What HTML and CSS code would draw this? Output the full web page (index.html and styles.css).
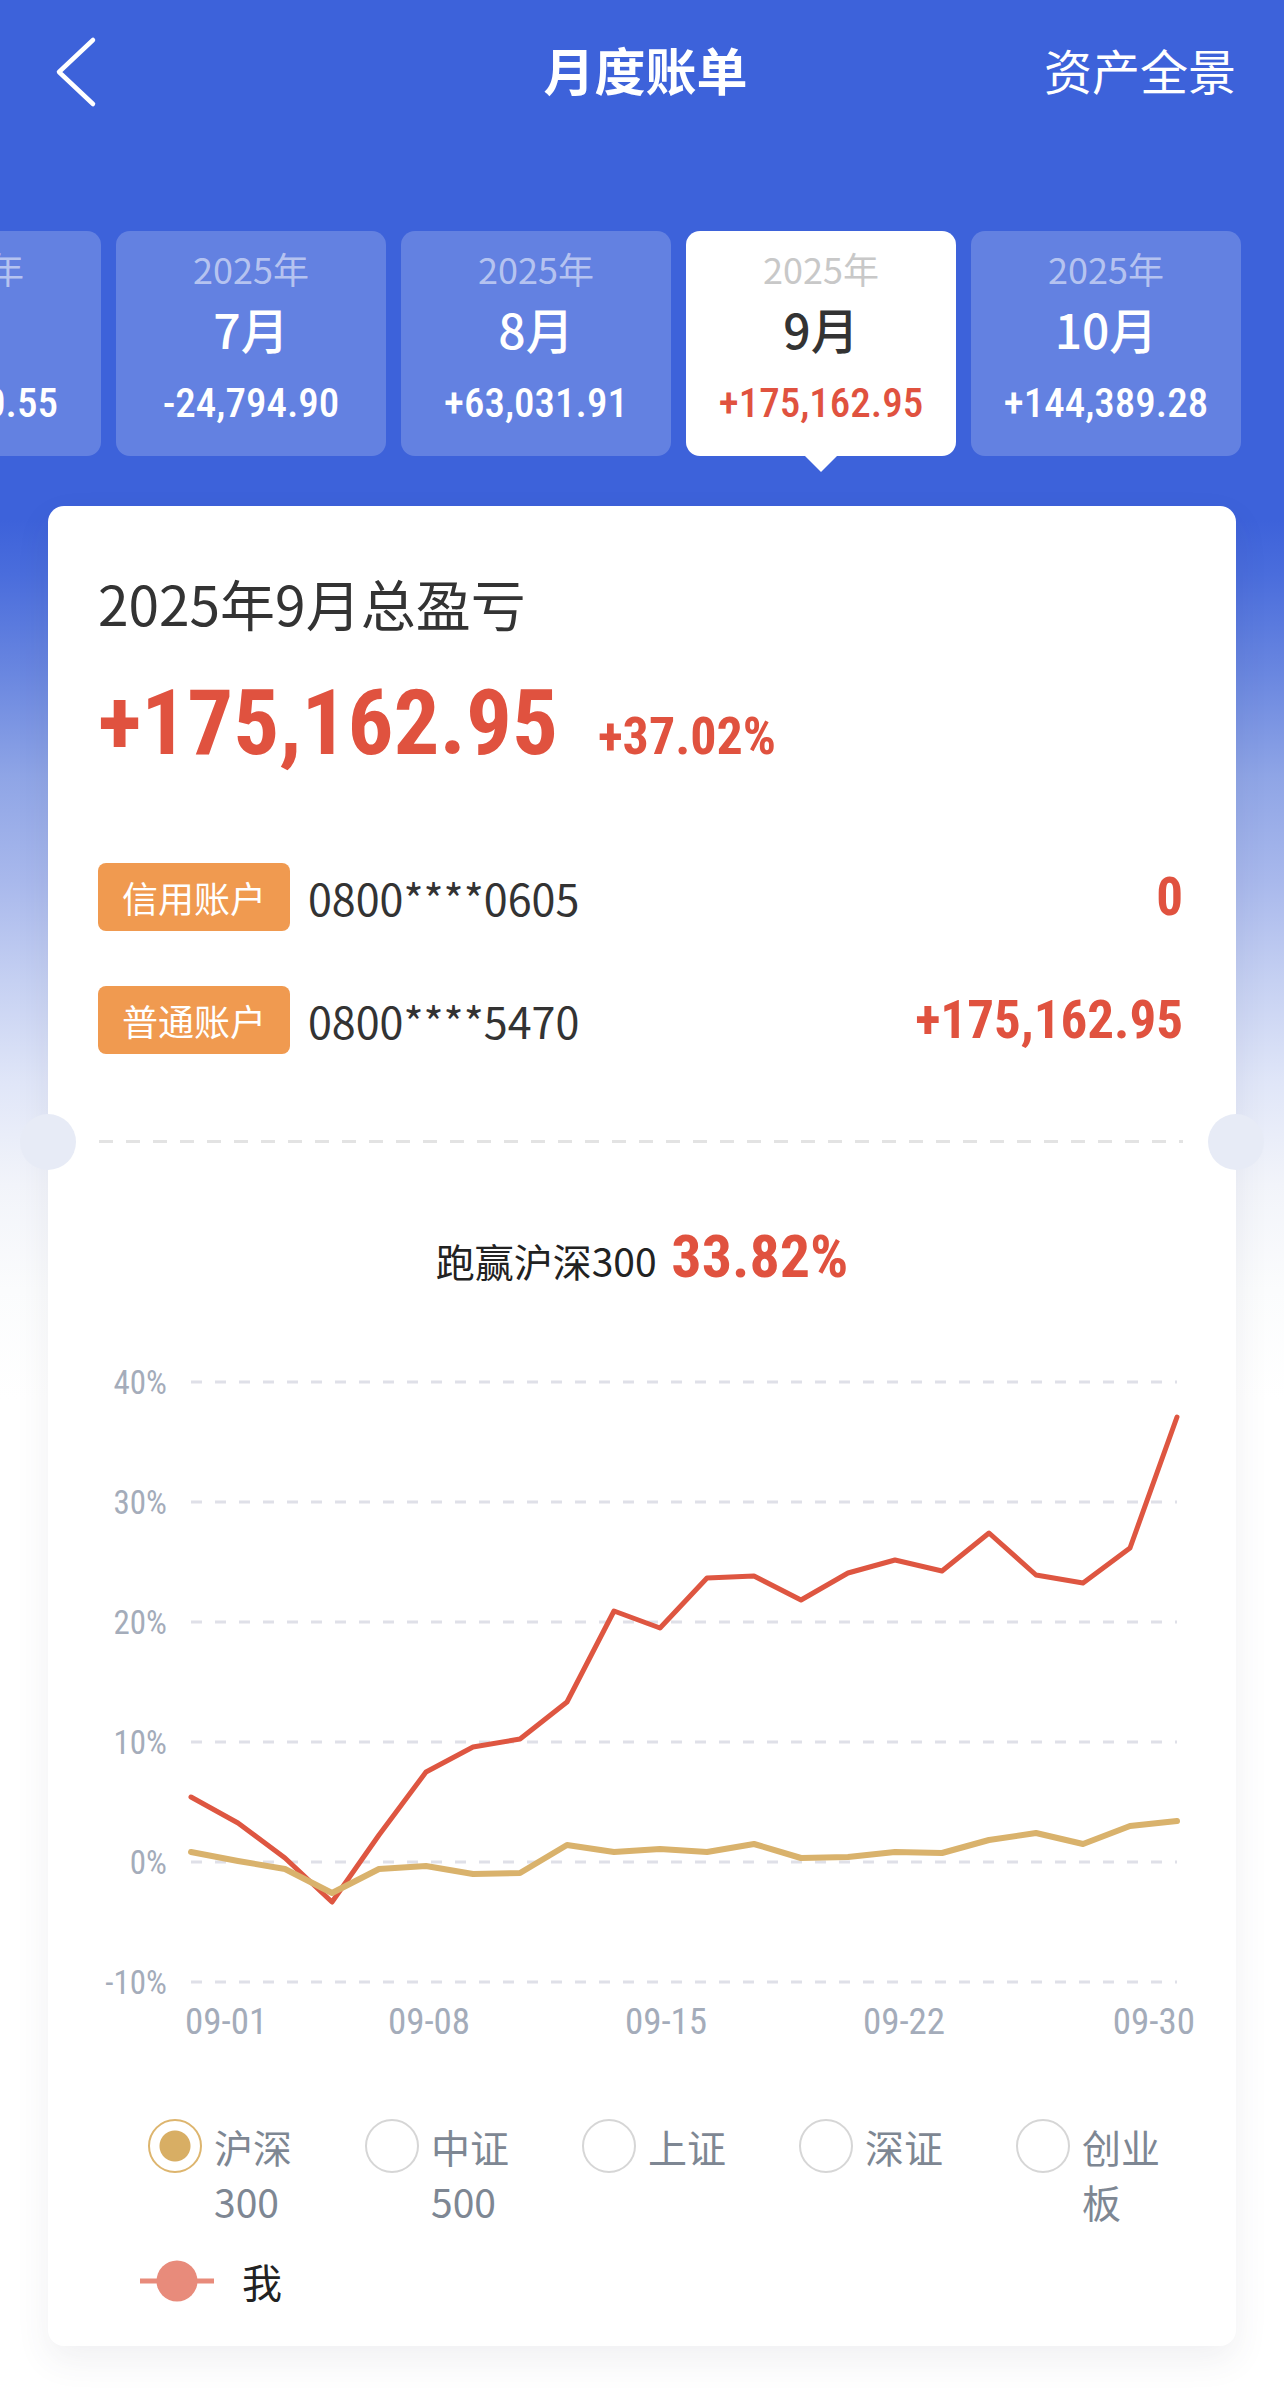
FILE: index.html
```html
<!DOCTYPE html>
<html lang="zh-CN">
  <head>
    <meta charset="utf-8">
    <title>月度账单</title>
    <link rel="stylesheet" href="styles.css">
  </head>
  <body>
    <header class="topbar">
      <a class="back" href="#">
        <svg width="44" height="72" viewBox="0 0 44 72">
          <path d="M38 4 L4 36 L38 68" fill="none" stroke="#fff" stroke-width="4.5" stroke-linecap="round" stroke-linejoin="round"/>
        </svg>
      </a>
      <h1 class="title">月度账单</h1>
      <a class="overview" href="#">资产全景</a>
    </header>

    <div class="months">
      <div class="month">
        <div class="month-year">2025年</div>
        <div class="month-name">6月</div>
        <div class="month-value num">+41,860.55</div>
      </div>
      <div class="month">
        <div class="month-year">2025年</div>
        <div class="month-name">7月</div>
        <div class="month-value num">-24,794.90</div>
      </div>
      <div class="month">
        <div class="month-year">2025年</div>
        <div class="month-name">8月</div>
        <div class="month-value num">+63,031.91</div>
      </div>
      <div class="month active">
        <div class="month-year">2025年</div>
        <div class="month-name">9月</div>
        <div class="month-value num">+175,162.95</div>
      </div>
      <div class="month">
        <div class="month-year">2025年</div>
        <div class="month-name">10月</div>
        <div class="month-value num">+144,389.28</div>
      </div>
    </div>

    <main class="bill">
      <section class="summary">
        <div class="summary-title">2025年9月总盈亏</div>
        <div class="summary-amount">
          <span class="summary-total num">+175,162.95</span>
          <span class="summary-rate num">+37.02%</span>
        </div>
        <ul class="accounts">
          <li class="account">
            <span class="account-tag">信用账户</span>
            <span class="account-no">0800****0605</span>
            <span class="account-pnl num">0</span>
          </li>
          <li class="account">
            <span class="account-tag">普通账户</span>
            <span class="account-no">0800****5470</span>
            <span class="account-pnl num">+175,162.95</span>
          </li>
        </ul>
      </section>

      <div class="divider"></div>

      <section class="compare">
        <div class="compare-title">跑赢沪深300 <span class="compare-rate num">33.82%</span></div>

        <!-- chart drawn in page coordinates -->
        <svg class="chart" width="1188" height="720" viewBox="49 1330 1188 720">
          <g class="grid">
            <line x1="192" y1="1382" x2="1178" y2="1382"/>
            <line x1="192" y1="1502" x2="1178" y2="1502"/>
            <line x1="192" y1="1622" x2="1178" y2="1622"/>
            <line x1="192" y1="1742" x2="1178" y2="1742"/>
            <line x1="192" y1="1862" x2="1178" y2="1862"/>
            <line x1="192" y1="1982" x2="1178" y2="1982"/>
          </g>
          <g class="axis-y">
            <text x="168" y="1394">40%</text>
            <text x="168" y="1514">30%</text>
            <text x="168" y="1634">20%</text>
            <text x="168" y="1754">10%</text>
            <text x="168" y="1874">0%</text>
            <text x="168" y="1994">-10%</text>
          </g>
          <g class="axis-x">
            <text x="186" y="2034">09-01</text>
            <text x="430" y="2034" text-anchor="middle">09-08</text>
            <text x="667" y="2034" text-anchor="middle">09-15</text>
            <text x="905" y="2034" text-anchor="middle">09-22</text>
            <text x="1196" y="2034" text-anchor="end">09-30</text>
          </g>
          <polyline class="line-me" points="192,1797 239,1823 286,1858 333,1902 380,1835 427,1772 474,1747 521,1739 568,1702 615,1611 661,1628 708,1578 755,1576 802,1600 849,1573 896,1560 943,1571 990,1533 1037,1575 1084,1583 1131,1548 1178,1417"/>
          <polyline class="line-index" points="192,1852 239,1861 286,1869 333,1893 380,1869 427,1866 474,1874 521,1873 568,1845 615,1852 661,1849 708,1852 755,1844 802,1858 849,1857 896,1852 943,1853 990,1840 1037,1833 1084,1844 1131,1826 1178,1821"/>
        </svg>

        <div class="legend">
          <div class="legend-item">
            <span class="radio on"></span>
            <span class="legend-label">沪深300</span>
          </div>
          <div class="legend-item">
            <span class="radio"></span>
            <span class="legend-label">中证500</span>
          </div>
          <div class="legend-item">
            <span class="radio"></span>
            <span class="legend-label">上证</span>
          </div>
          <div class="legend-item">
            <span class="radio"></span>
            <span class="legend-label">深证</span>
          </div>
          <div class="legend-item">
            <span class="radio"></span>
            <span class="legend-label">创业板</span>
          </div>
        </div>

        <div class="legend-me">
          <svg width="74" height="42" viewBox="0 0 74 42">
            <line x1="0" y1="21" x2="74" y2="21" stroke="#e88b7b" stroke-width="5"/>
            <circle cx="37" cy="21" r="20.5" fill="#e88b7b"/>
          </svg>
          <span class="legend-me-label">我</span>
        </div>
      </section>
    </main>
  </body>
</html>
```

FILE: styles.css
```css
* {
  box-sizing: border-box;
}

body {
  margin: 0;
  min-height: 2388px;
  overflow-x: hidden;
  font-family: "Noto Sans CJK SC", "Noto Sans", sans-serif;
  color: #333;
  background: linear-gradient(180deg,
    #3d62da 0,
    #3d62da 520px,
    #4a6ddc 575px,
    #6a87e0 675px,
    #8fa5e6 777px,
    #a8b8ec 880px,
    #c5d0f2 980px,
    #e0e6f8 1083px,
    #f2f4fa 1185px,
    #fbfcfd 1290px,
    #ffffff 1400px);
}

/* numbers use a narrow face */
.num {
  font-family: "Roboto Condensed", "DejaVu Sans Condensed", "Liberation Sans Narrow", "Roboto", sans-serif;
  font-stretch: condensed;
}

a {
  color: inherit;
  text-decoration: none;
}

/* top bar */
.topbar {
  height: 144px;
  display: grid;
  grid-template-columns: 1fr auto 1fr;
  align-items: center;
  padding: 0 48px 0 55px;
  color: #fff;
}

.back {
  display: flex;
}

.title {
  margin: 0 0 6px;
  font-size: 51px;
  font-weight: 700;
  line-height: 1;
}

.overview {
  justify-self: end;
  margin-bottom: 6px;
  font-size: 48px;
}

/* month tabs */
.months {
  display: flex;
  gap: 15px;
  margin: 87px 0 0 -169px;
}

.month {
  position: relative;
  flex: 0 0 270px;
  height: 225px;
  padding-top: 15px;
  border-radius: 14px;
  background: rgba(255, 255, 255, 0.2);
  color: #fff;
  text-align: center;
}

.month-year {
  font-size: 36px;
  line-height: 44px;
  color: rgba(255, 255, 255, 0.55);
}

.month-name {
  margin-top: 10px;
  font-size: 48px;
  line-height: 56px;
  font-weight: 500;
}

.month-value {
  margin-top: 23px;
  font-size: 41px;
  line-height: 48px;
  font-weight: 500;
}

.month.active {
  background: #fff;
}

.month.active .month-year {
  color: #c8c8c8;
}

.month.active .month-name {
  color: #333;
}

.month.active .month-value {
  color: #e0523f;
}

.month.active::after {
  content: "";
  position: absolute;
  left: 50%;
  bottom: -16px;
  margin-left: -16px;
  border: 16px solid transparent;
  border-top-color: #fff;
  border-bottom: 0;
}

/* bill card */
.bill {
  width: 1188px;
  margin: 50px auto 0;
  padding: 61px 50px 37px;
  background: #fff;
  border-radius: 16px;
  box-shadow: 0 14px 34px rgba(60, 70, 90, 0.08);
}

.summary-title {
  font-size: 55px;
  line-height: 70px;
  color: #333;
}

.summary-amount {
  display: flex;
  align-items: baseline;
  margin-top: 36px;
  color: #e0523f;
  font-weight: 700;
}

.summary-total {
  font-size: 91px;
  line-height: 100px;
}

.summary-rate {
  margin-left: 40px;
  font-size: 52px;
}

.accounts {
  list-style: none;
  margin: 90px 0 0;
  padding: 0;
}

.account {
  display: flex;
  align-items: center;
  height: 68px;
}

.account + .account {
  margin-top: 55px;
}

.account-tag {
  width: 192px;
  height: 68px;
  line-height: 68px;
  border-radius: 8px;
  background: #f09a50;
  color: #fff;
  font-size: 36px;
  text-align: center;
}

.account-no {
  margin-left: 18px;
  font-size: 43px;
  color: #333;
}

.account-pnl {
  margin-left: auto;
  padding-right: 3px;
  font-size: 53px;
  font-weight: 700;
  color: #e0523f;
}

.divider {
  position: relative;
  height: 3px;
  margin-top: 86px;
  margin-left: -50px;
  margin-right: -50px;
  padding: 0 53px 0 51px;
  background-image: repeating-linear-gradient(90deg, #e3e3e3 0 14px, transparent 14px 27px);
  background-clip: content-box;
  background-origin: content-box;
}

.divider::before,
.divider::after {
  content: "";
  position: absolute;
  top: 50%;
  width: 56px;
  height: 56px;
  margin-top: -28px;
  border-radius: 50%;
  background: #e7ebf6;
}

.divider::before {
  left: -28px;
}

.divider::after {
  right: -28px;
}

/* comparison chart */
.compare-title {
  margin-top: 79px;
  line-height: 70px;
  text-align: center;
  font-size: 39px;
  color: #222;
}

.compare-rate {
  margin-left: 6px;
  font-size: 60px;
  font-weight: 700;
  color: #e0523f;
}

.chart {
  display: block;
  margin: 35px -50px 0;
}

.grid line {
  stroke: #dfe0e8;
  stroke-width: 3;
  stroke-dasharray: 11 13;
}

.axis-y text,
.axis-x text {
  font-family: "Roboto Condensed", "DejaVu Sans Condensed", "Liberation Sans Narrow", "Roboto", sans-serif;
  font-stretch: condensed;
  fill: #a4acba;
}

.axis-y text {
  font-size: 33px;
  text-anchor: end;
}

.axis-x text {
  font-size: 37px;
}

.line-me,
.line-index {
  fill: none;
  stroke-linejoin: round;
  stroke-linecap: round;
}

.line-me {
  stroke: #de5641;
  stroke-width: 5;
}

.line-index {
  stroke: #d9b26c;
  stroke-width: 6;
}

.legend {
  display: grid;
  grid-template-columns: repeat(5, 217px);
  margin-top: 69px;
  padding-left: 50px;
}

.legend-item {
  display: flex;
  align-items: flex-start;
  gap: 12px;
}

.radio {
  flex: 0 0 54px;
  height: 54px;
  border: 2px solid #d6d6d6;
  border-radius: 50%;
}

.radio.on {
  border-color: #ddb56e;
  background: radial-gradient(circle, #d8ae64 0 15px, transparent 16px);
}

.legend-label {
  width: 80px;
  font-size: 39px;
  line-height: 55px;
  color: #7e8793;
}

.legend-me {
  display: flex;
  align-items: center;
  height: 56px;
  margin: 24px 0 0 42px;
}

.legend-me svg {
  display: block;
}

.legend-me-label {
  margin-left: 28px;
  font-size: 40px;
  color: #222;
}
```
